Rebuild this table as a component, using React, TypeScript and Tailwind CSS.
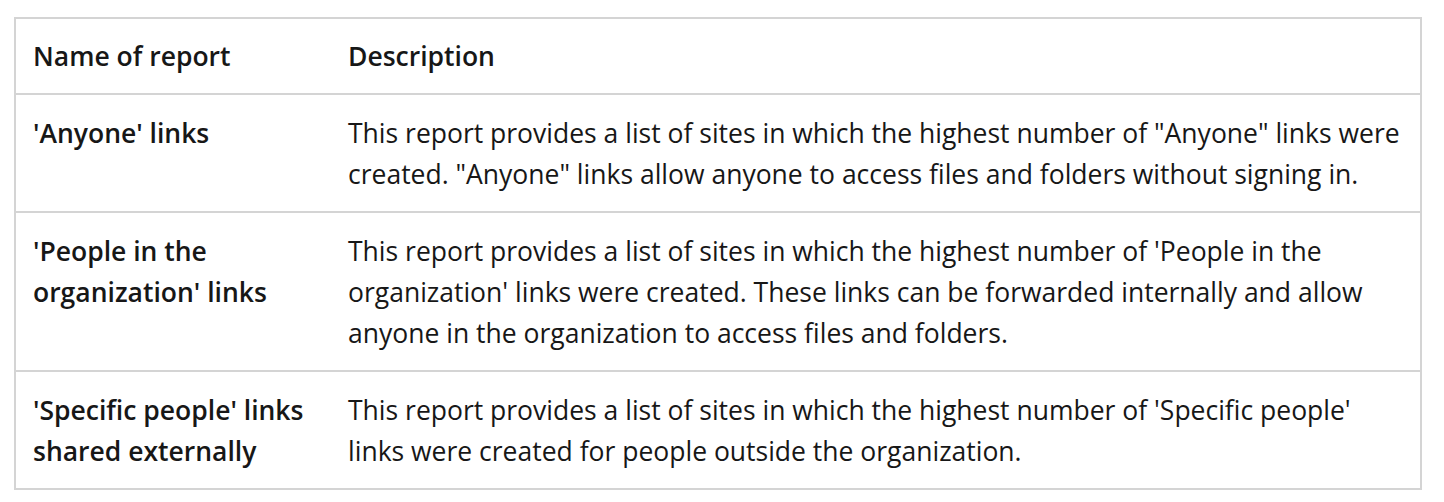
const rows: { name: string[]; desc: string[] }[] = [
  {
    name: ["'Anyone' links"],
    desc: [
      'This report provides a list of sites in which the highest number of "Anyone" links were',
      'created. "Anyone" links allow anyone to access files and folders without signing in.',
    ],
  },
  {
    name: ["'People in the", "organization' links"],
    desc: [
      "This report provides a list of sites in which the highest number of 'People in the",
      "organization' links were created. These links can be forwarded internally and allow",
      'anyone in the organization to access files and folders.',
    ],
  },
  {
    name: ["'Specific people' links", 'shared externally'],
    desc: [
      "This report provides a list of sites in which the highest number of 'Specific people'",
      'links were created for people outside the organization.',
    ],
  },
];

function Lines({ lines }: { lines: string[] }) {
  return (
    <>
      {lines.map((l, i) => (
        <span key={i} className="block whitespace-nowrap">
          {l}
        </span>
      ))}
    </>
  );
}

export default function App() {
  return (
    <div className="min-h-screen bg-white pl-[14px] pt-[17px] font-['Open_Sans',sans-serif] text-[26.5px] leading-[41px] text-[#171717]">
      <table className="w-[1408px] table-fixed border-collapse border-2 border-[#d4d4d4] text-left">
        <colgroup>
          <col className="w-[316px]" />
          <col />
        </colgroup>
        <thead>
          <tr>
            <th className="pt-[17px] pb-[16px] pl-[17px] pr-4 font-semibold">Name of report</th>
            <th className="pt-[17px] pb-[16px] pl-[17px] pr-4 font-semibold">Description</th>
          </tr>
        </thead>
        <tbody>
          {rows.map((r, i) => (
            <tr key={i} className="border-t-2 border-[#d4d4d4] align-top">
              <td className="pt-[18px] pb-[16px] pl-[17px] pr-2 font-semibold">
                <Lines lines={r.name} />
              </td>
              <td className="pt-[18px] pb-[16px] pl-[17px] pr-4">
                <Lines lines={r.desc} />
              </td>
            </tr>
          ))}
        </tbody>
      </table>
    </div>
  );
}
